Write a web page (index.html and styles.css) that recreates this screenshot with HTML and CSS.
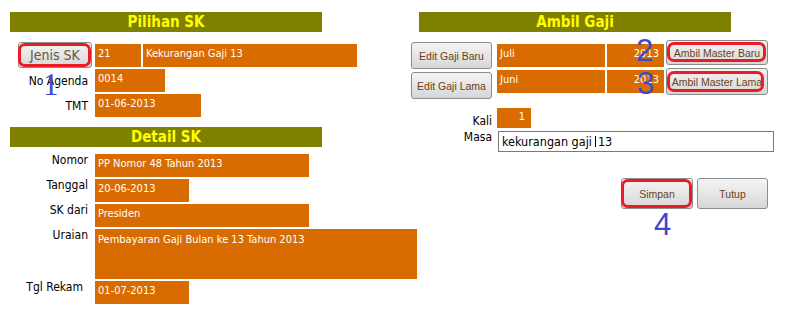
FILE: index.html
```html
<!DOCTYPE html>
<html>
<head>
<meta charset="utf-8">
<link rel="stylesheet" href="styles.css">
</head>
<body>
<div class="page">
  <div class="left">
    <div class="hdr">Pilihan SK</div>
    <div class="form pil">
      <div class="lbl"><button class="btn btn-jenis mark">Jenis SK</button></div>
      <div class="fields"><div class="fld w46">21</div><div class="fld w214">Kekurangan Gaji 13</div></div>
      <div class="lbl mid">No Agenda</div>
      <div class="fields"><div class="fld w70">0014</div></div>
      <div class="lbl mid">TMT</div>
      <div class="fields"><div class="fld w106">01-06-2013</div></div>
    </div>
    <div class="hdr hdr2">Detail SK</div>
    <div class="form det">
      <div class="lbl top">Nomor</div>
      <div class="fields"><div class="fld w214">PP Nomor 48 Tahun 2013</div></div>
      <div class="lbl top">Tanggal</div>
      <div class="fields"><div class="fld w94">20-06-2013</div></div>
      <div class="lbl top">SK dari</div>
      <div class="fields"><div class="fld w214">Presiden</div></div>
      <div class="lbl top">Uraian</div>
      <div class="fields"><div class="fld w322 tall">Pembayaran Gaji Bulan ke 13 Tahun 2013</div></div>
      <div class="lbl top rekam">Tgl Rekam</div>
      <div class="fields"><div class="fld w94">01-07-2013</div></div>
    </div>
  </div>
  <div class="right">
    <div class="hdr hdr-r">Ambil Gaji</div>
    <div class="gaji">
      <div class="colA">
        <button class="btn btn-edit">Edit Gaji Baru</button>
        <button class="btn btn-edit">Edit Gaji Lama</button>
      </div>
      <div class="colB">
        <div class="fields"><div class="fld w108">Juli</div><div class="fld w57 rt">2013</div></div>
        <div class="fields"><div class="fld w108">Juni</div><div class="fld w57 rt">2013</div></div>
      </div>
      <div class="colC">
        <button class="btn btn-master mark mark-baru">Ambil Master Baru</button>
        <button class="btn btn-master btn-lama mark mark-lama">Ambil Master Lama</button>
      </div>
    </div>
    <div class="masa">
      <div class="lbl bottom">Kali</div>
      <div class="fields"><div class="fld kali">1</div></div>
      <div class="lbl top masa-lbl">Masa</div>
      <div class="input">kekurangan gaji<span class="caret"></span>13</div>
    </div>
    <div class="actions">
      <button class="btn btn-act mark">Simpan</button>
      <button class="btn btn-act">Tutup</button>
    </div>
  </div>
  <span class="num serif n1">1</span>
  <span class="num n2">2</span>
  <span class="num n3">3</span>
  <span class="num n4">4</span>
</div>
</body>
</html>
```
FILE: styles.css
```css
html, body {
  margin: 0;
  padding: 0;
  background: #ffffff;
}
body {
  width: 786px;
  height: 316px;
  overflow: hidden;
  font-family: "DejaVu Sans Condensed", "DejaVu Sans", sans-serif;
  font-stretch: condensed;
  color: #000;
}
.page {
  position: relative;
  display: flex;
  padding-top: 12px;
}
.left {
  width: 401px;
  margin-left: 10px;
  flex: none;
}
.right {
  width: 363px;
  flex: none;
}
.hdr {
  width: 312px;
  height: 20px;
  background: #808000;
  color: #ffff00;
  font-weight: bold;
  font-size: 15px;
  line-height: 20px;
  text-align: center;
}
.hdr2 { margin-top: 10px; }
.hdr-r { margin-left: 8px; }

.form {
  display: grid;
  grid-template-columns: 82px 1fr;
  column-gap: 3px;
  row-gap: 2px;
}
.pil {
  margin-top: 12px;
  grid-template-rows: 23px 23px 23px;
}
.det {
  margin-top: 7px;
  grid-template-rows: 23px 23px 23px 50px 23px;
}
.lbl {
  display: flex;
  justify-content: flex-end;
  padding-right: 4px;
  font-size: 12px;
  line-height: 14px;
}
.lbl.mid { align-items: center; }
.lbl.top { align-items: flex-start; margin-top: -1px; }
.lbl.bottom { align-items: flex-end; }
.lbl.rekam { padding-right: 9px; }

.fields {
  display: flex;
  gap: 2px;
}
.fld {
  height: 23px;
  box-sizing: border-box;
  background: #d96c00;
  color: #ffffff;
  font-size: 11px;
  line-height: 13px;
  padding: 3px 3px 0 3px;
  white-space: nowrap;
  overflow: visible;
}
.fld.rt { text-align: right; padding-right: 5px; }
.fld.tall { height: 50px; padding-top: 4px; }
.w46 { width: 46px; }
.w214 { width: 214px; }
.w70 { width: 70px; }
.w106 { width: 106px; }
.w94 { width: 94px; }
.w322 { width: 322px; }
.w108 { width: 108px; }
.w57 { width: 57px; }

.btn {
  box-sizing: border-box;
  border: 1px solid #8c8c8c;
  border-radius: 3px;
  background: linear-gradient(#f4f4f4, #e6e6e6 50%, #d6d6d6);
  color: #6a4216;
  font-family: "Liberation Sans", Arial, sans-serif;
  font-size: 10.5px;
  padding: 0;
  margin: 0;
  cursor: default;
}
.mark { position: relative; }
.mark::after {
  content: "";
  position: absolute;
  top: 0; left: -1px; right: 0; bottom: 0;
  border: 3px solid #ed1c24;
  border-radius: 7px;
}
.btn-jenis {
  width: 74px;
  height: 26px;
  margin-top: -2px;
  font-family: "DejaVu Sans Condensed", "DejaVu Sans", sans-serif;
  font-stretch: condensed;
  font-size: 14px;
  color: #6b5444;
  margin-right: -4px;
}

.gaji {
  display: flex;
  align-items: flex-start;
}
.colA {
  display: flex;
  flex-direction: column;
  gap: 3px;
  margin-top: 10px;
}
.btn-edit {
  width: 81px;
  height: 27px;
}
.colB {
  display: flex;
  flex-direction: column;
  gap: 3px;
  margin-top: 12px;
  margin-left: 5px;
}
.colC {
  display: flex;
  flex-direction: column;
  gap: 3px;
  margin-top: 8px;
  margin-left: 2px;
}
.btn-master {
  width: 102px;
  height: 25px;
}
.btn-master.btn-lama { height: 27px; }
.mark-baru::after { top: 1px; right: 1px; bottom: 2px; left: 0; }
.mark-lama::after { top: 2px; right: 3px; bottom: 2px; left: 0; }

.masa {
  display: grid;
  grid-template-columns: 81px 1fr;
  column-gap: 5px;
  grid-template-rows: 20px 21px;
  row-gap: 3px;
  margin-top: 9px;
}
.masa .lbl { padding-right: 0; }
.masa-lbl { margin-top: 1px; }
.fld.kali {
  width: 34px;
  height: 20px;
  text-align: right;
  padding: 2px 6px 0 0;
  font-size: 11px;
}
.input {
  box-sizing: border-box;
  width: 276px;
  height: 21px;
  margin-left: 1px;
  border: 1px solid #7a7a7a;
  background: #fff;
  font-size: 12.5px;
  line-height: 19px;
  padding-left: 3px;
  white-space: nowrap;
}
.caret {
  display: inline-block;
  width: 1px;
  height: 11px;
  background: #000;
  margin: 0 2px 0 3px;
  vertical-align: -1px;
}
.actions {
  display: flex;
  justify-content: flex-end;
  gap: 4px;
  margin-top: 26px;
  padding-right: 6px;
}
.btn-act {
  height: 31px;
  width: 72px;
}
.btn-act + .btn-act { width: 71px; }

.num {
  position: absolute;
  color: #3f48cc;
  font-family: "Liberation Sans", Arial, sans-serif;
  font-size: 31px;
  line-height: 1;
}
.num.serif { font-family: "Liberation Serif", "Times New Roman", serif; }
.n1 { left: 43px; top: 69px; }
.n2 { left: 636px; top: 35px; }
.n3 { left: 637px; top: 68px; }
.n4 { left: 654px; top: 209px; }
```
